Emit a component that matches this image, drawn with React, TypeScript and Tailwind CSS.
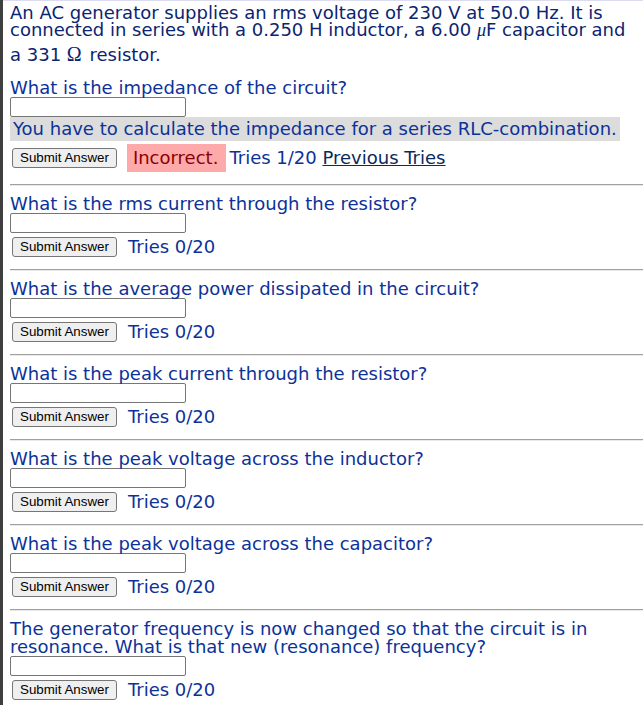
const QUESTIONS = [
  "What is the rms current through the resistor?",
  "What is the average power dissipated in the circuit?",
  "What is the peak current through the resistor?",
  "What is the peak voltage across the inductor?",
  "What is the peak voltage across the capacitor?",
  "The generator frequency is now changed so that the circuit is in resonance. What is that new (resonance) frequency?",
];

function AnswerBox() {
  return (
    <input
      type="text"
      className="block h-[20px] w-[176px] rounded-[2px] border border-[#767676] bg-white"
    />
  );
}

function SubmitButton() {
  return (
    <button className="ml-[2px] h-[20px] shrink-0 rounded-[3px] border border-[#767676] bg-[#efefef] px-[7px] font-['Liberation_Sans',Arial,sans-serif] text-[13.333px] leading-none text-black">
      Submit Answer
    </button>
  );
}

function Divider() {
  return <hr className="mt-[12px] border-t border-b border-t-[#a0a0a0] border-b-[#e8e8e8]" />;
}

function Part({ question }: { question: string }) {
  return (
    <div>
      <Divider />
      <p className="mt-[9px] text-[18px] leading-[18px] text-[#0c3299]">{question}</p>
      <AnswerBox />
      <div className="mt-[4px] flex items-center">
        <SubmitButton />
        <span className="ml-[11px] text-[18px] leading-[20px] text-[#0c3299]">Tries 0/20</span>
      </div>
    </div>
  );
}

export default function App() {
  return (
    <div className="min-h-screen border-l-[3px] border-[#3f3f3f] bg-white font-['DejaVu_Sans',Verdana,sans-serif]">
      <div className="border-t border-[#dcdcf0] pt-[3px] pl-[7px]">
        {/* problem statement */}
        <p className="mb-[15px] whitespace-nowrap text-[18px] leading-[17px] text-[#0b2470]">
          An AC generator supplies an rms voltage of 230 V at 50.0 Hz. It is
          <br />
          connected in series with a 0.250 H inductor, a 6.00 <i className="font-['Liberation_Serif',serif]">μ</i>F capacitor and
          <br />
          a 331{" "}
          <span className="mr-[2px] inline-block pt-[5px] font-['Liberation_Serif',serif] text-[20px] leading-[20px]">
            Ω
          </span>{" "}
          resistor.
        </p>

        {/* part 1 */}
        <p className="text-[18px] leading-[18px] text-[#0c3299]">What is the impedance of the circuit?</p>
        <AnswerBox />
        <div>
          <span className="inline-block bg-[#dcdcdc] px-[3px] py-[2px] text-[18px] leading-[20px] text-[#0c3299]">
            You have to calculate the impedance for a series RLC-combination.
          </span>
        </div>
        <div className="mt-[2px] flex items-center">
          <SubmitButton />
          <span className="ml-[10px] bg-[#ffaaaa] py-[4px] pr-[8px] pl-[6px] text-[18px] leading-[20px] text-[#8b0000]">
            Incorrect.
          </span>
          <span className="ml-[3px] text-[18px] leading-[20px] text-[#0c3299]">
            Tries 1/20{" "}
            <a href="#" className="text-[#0a2a5c] underline">
              Previous Tries
            </a>
          </span>
        </div>

        {QUESTIONS.map((q) => (
          <Part key={q} question={q} />
        ))}
      </div>
    </div>
  );
}
